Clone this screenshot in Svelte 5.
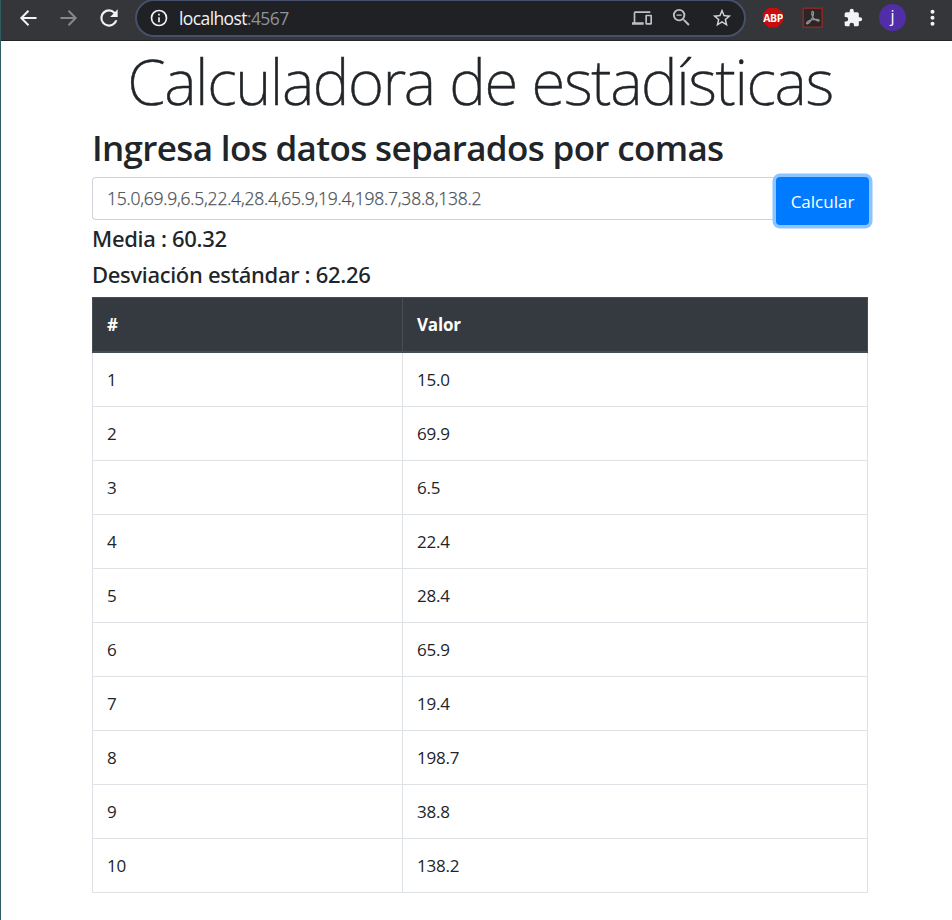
<script>
  const values = ['15.0', '69.9', '6.5', '22.4', '28.4', '65.9', '19.4', '198.7', '38.8', '138.2'];
  let data = $state(values.join(','));
</script>

<div class="window">
  <header class="toolbar">
    <nav class="nav">
      <svg width="24" height="24" viewBox="0 0 24 24" fill="none" stroke="#f1f3f4" stroke-width="2"><path d="M20.500 12H5.500M12.500 4.800L5.300 12L12.500 19.2" /></svg>
      <svg width="24" height="24" viewBox="0 0 24 24" fill="none" stroke="#87888b" stroke-width="2"><path d="M4.500 12H19.500M12.500 4.800L19.700 12L12.500 19.2" /></svg>
      <svg width="26" height="26" viewBox="0 0 24 24" fill="#f1f3f4"><path d="M17.65 6.35A7.95 7.95 0 0 0 12 4a8 8 0 1 0 7.73 10h-2.08A6 6 0 1 1 12 6c1.66 0 3.14.69 4.22 1.78L13 11h7V4z" /></svg>
    </nav>
    <div class="omnibox">
      <svg width="20" height="20" viewBox="0 0 24 24" fill="#f1f3f4"><path d="M11 17h2v-6h-2zm0-8h2V7h-2zm1-7a10 10 0 1 0 0 20 10 10 0 0 0 0-20m0 18a8 8 0 1 1 0-16 8 8 0 0 1 0 16" /></svg>
      <span class="url">localhost<span>:4567</span></span>
      <div class="actions">
        <svg width="20" height="20" viewBox="0 0 24 24" fill="#bdc1c6"><path d="M4 6h18V4H4a2 2 0 0 0-2 2v11H0v3h14v-3H4zm19 2h-6a1 1 0 0 0-1 1v10a1 1 0 0 0 1 1h6a1 1 0 0 0 1-1V9a1 1 0 0 0-1-1m-1 10h-4v-8h4z" /></svg>
        <svg width="23" height="23" viewBox="0 0 24 24" fill="#bdc1c6"><path d="M15.5 14h-.79l-.28-.27A6.47 6.47 0 0 0 16 9.5 6.5 6.5 0 1 0 9.500 16c1.61 0 3.09-.59 4.23-1.57l.27.28v.79l5 4.99L20.49 19zm-6 0a4.5 4.5 0 1 1 0-9 4.5 4.5 0 0 1 0 9M6.800 8.800h5.400v1.5H6.800z" /></svg>
        <svg width="22" height="22" viewBox="0 0 24 24" fill="#d2d5d9"><path d="M22 9.24l-7.19-.62L12 2 9.19 8.63 2 9.24l5.46 4.73L5.82 21 12 17.27 18.18 21l-1.63-7.03zM12 15.4l-3.76 2.27 1-4.28-3.32-2.88 4.38-.38L12 6.1l1.71 4.04 4.38.38-3.32 2.88 1 4.28z" /></svg>
      </div>
    </div>
    <div class="extensions">
      <div class="abp"><span>ABP</span></div>
      <svg width="22" height="22" viewBox="0 0 22 22"><rect x="1.2" y="1.2" width="19" height="19" fill="#2c2526" stroke="#8a2b29" stroke-width="1.4" /><path d="M10.200 4.500C12.400 4.300 11.400 8 10.500 10.200C9 13.500 6.500 17.200 4.800 16.700C3.600 15.600 7 13.500 10.400 12.700C13.800 12 17.300 12.200 17.200 13.500C16.500 15 13 13 11.300 10.800C9.900 8.800 9.200 5.300 10.200 4.500Z" fill="none" stroke="#929196" stroke-width="1.3" /></svg>
      <svg class="puzzle" width="20" height="20" viewBox="0 0 24 24" fill="#f1f3f4"><path d="M20.5 11H19V7a2 2 0 0 0-2-2h-4V3.5a2.5 2.5 0 0 0-5 0V5H4a2 2 0 0 0-2 2v3.8h1.5a2.7 2.7 0 0 1 0 5.4H2V20a2 2 0 0 0 2 2h3.800v-1.5a2.7 2.7 0 0 1 5.4 0V22H17a2 2 0 0 0 2-2v-4h1.500a2.5 2.5 0 0 0 0-5" /></svg>
      <div class="avatar">j</div>
      <svg width="22" height="22" viewBox="0 0 22 22" fill="#f1f3f4"><circle cx="10.500" cy="4.800" r="2" /><circle cx="10.500" cy="10.800" r="2" /><circle cx="10.500" cy="16.800" r="2" /></svg>
    </div>
  </header>

  <main>
    <h1>Calculadora de estadísticas</h1>
    <h2>Ingresa los datos separados por comas</h2>
    <form onsubmit={(e) => e.preventDefault()}>
      <input type="text" bind:value={data} aria-label="Datos" />
      <button type="submit">Calcular</button>
    </form>
    <h4>Media : 60.32</h4>
    <h4>Desviación estándar : 62.26</h4>
    <table>
      <thead>
        <tr><th class="index">#</th><th>Valor</th></tr>
      </thead>
      <tbody>
        {#each values as value, i}
          <tr><td>{i + 1}</td><td>{value}</td></tr>
        {/each}
      </tbody>
    </table>
  </main>
</div>

<style>
  :global(body) { margin: 0; background: #fff; }
  .window {
    box-sizing: border-box;
    height: 920px;
    overflow: hidden;
    border-left: 1px solid #315c61;
    background: #fff;
    color: #212529;
    font-family: "Open Sans", "Noto Sans", sans-serif;
  }
  svg { display: block; flex: none; }
  .toolbar {
    box-sizing: border-box;
    height: 41px;
    padding-bottom: 5px;
    display: flex;
    align-items: center;
    background: #35363a;
    border-bottom: 1px solid #242528;
  }
  .nav { display: flex; align-items: center; gap: 16px; padding-left: 15px; width: 119px; }
  .omnibox {
    box-sizing: border-box;
    width: 611px;
    height: 38px;
    padding: 0 11px 0 12px;
    display: flex;
    align-items: center;
    border: 2px solid #46506a;
    border-radius: 19px;
    background: #202124;
  }
  .url { margin-left: 10px; font-size: 17.5px; letter-spacing: -0.6px; color: #f1f3f4; }
  .url span { color: #909397; }
  .actions { display: flex; align-items: center; gap: 18px; margin-left: auto; }
  .extensions { display: flex; align-items: center; margin-left: 16px; gap: 18px; }
  .abp {
    width: 22px;
    height: 20px;
    display: flex;
    align-items: center;
    justify-content: center;
    background: #c70d0d;
    clip-path: polygon(31% 0, 69% 0, 96% 29%, 96% 71%, 69% 100%, 31% 100%, 4% 71%, 4% 29%);
    color: #fff;
    font-size: 10.5px;
    font-weight: 700;
    letter-spacing: -0.4px;
  }
  .puzzle { margin: 0 1px; }
  .avatar {
    width: 27px;
    height: 27px;
    margin: 0 -2px 0 -3px;
    border-radius: 50%;
    background: #512da8;
    color: #fff;
    font-size: 16px;
    line-height: 25px;
    text-align: center;
  }
  main { width: 776px; margin-left: 91px; }
  h1, h2, h4 { margin: 0; white-space: nowrap; }
  h1 {
    height: 85px;
    line-height: 81px;
    font-family: "Noto Sans", sans-serif;
    font-size: 62px;
    font-weight: 200;
    letter-spacing: -1.4px;
    -webkit-text-stroke: 0.5px #212529;
    text-align: center;
  }
  h2 { height: 51px; line-height: 43px; font-size: 35px; font-weight: 600; letter-spacing: -0.65px; }
  form { display: flex; align-items: flex-start; height: 48px; }
  input {
    box-sizing: border-box;
    width: 684px;
    height: 43px;
    padding: 0 14px 1px;
    border: 1px solid #ced4da;
    border-right: 0;
    border-radius: 4px 0 0 4px;
    color: #495057;
    font: 300 17.5px "Open Sans", sans-serif;
    letter-spacing: -0.22px;
    -webkit-text-stroke: 0.25px #495057;
    outline: 0;
  }
  button {
    width: 93px;
    height: 48px;
    flex: none;
    margin-right: -1px;
    padding: 0;
    border: 0;
    border-radius: 4px;
    background: #007bff;
    box-shadow: 0 0 0 3.500px #8dc4ff;
    color: #fff;
    font: 400 17px "Open Sans", sans-serif;
  }
  h4 {
    height: 36px;
    line-height: 27px;
    font-family: "Noto Sans", sans-serif;
    font-size: 22px;
    font-weight: 500;
    letter-spacing: -0.3px;
  }
  table { width: 776px; border-collapse: collapse; table-layout: fixed; font-size: 17px; letter-spacing: -0.2px; }
  th, td { box-sizing: border-box; padding: 0 14px; border: 1px solid #dee2e6; text-align: left; }
  th { height: 54px; background: #343a40; border-color: #454d55; border-bottom-width: 2px; color: #fff; font-weight: 700; }
  .index { width: 310px; }
  td { height: 54px; }
  tbody tr:first-child td { height: 55px; }
</style>
